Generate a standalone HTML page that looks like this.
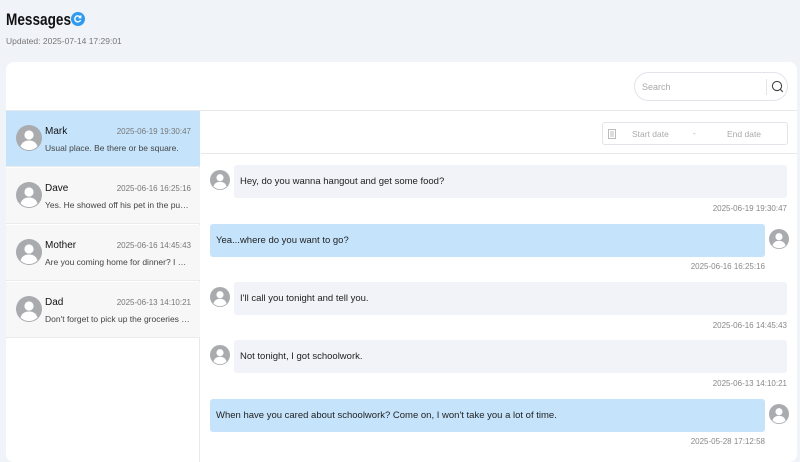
<!DOCTYPE html>
<html><head><meta charset="utf-8"><style>
*{box-sizing:border-box;margin:0;padding:0}
body{width:800px;height:450px;overflow:hidden;background:#f0f3f8;font-family:"Liberation Sans",sans-serif;position:relative;color:#222}
h1{position:absolute;left:6px;top:10px;font-size:17px;font-weight:bold;color:#111;transform:scaleX(0.8);transform-origin:left top}
.ref{position:absolute;left:71px;top:12px;width:14px;height:14px;border-radius:50%;background:#2f9bf0}
.upd{position:absolute;left:6px;top:36px;font-size:8.5px;color:#777}
.card{position:absolute;left:6px;top:62px;width:791px;height:400px;background:#fff;border-radius:8px;overflow:hidden}
.search{position:absolute;left:628px;top:10px;width:154px;height:29px;border:1px solid #e2e4ea;border-radius:15px;font-size:9px;color:#aaa;padding:9px 0 0 7px}
.hline{position:absolute;left:0;top:48px;width:791px;height:1px;background:#e6e8ec}
.list{position:absolute;left:0;top:49px;width:194px;height:360px;border-right:1px solid #e6e8ec}
.it{position:absolute;left:0;width:194px;height:56px;background:#f7f7f7;border-bottom:1px solid #ebebeb}
.it.sel{background:#c5e4fc}
.it svg{position:absolute;left:10px;top:14px}
.nm{position:absolute;left:39px;top:15px;font-size:10px;color:#111}
.tm{position:absolute;right:9px;top:16px;font-size:8px;color:#777}
.pv{position:absolute;left:39px;top:32px;width:148px;font-size:8.5px;color:#444;white-space:nowrap;overflow:hidden;text-overflow:ellipsis}
.date{position:absolute;left:596px;top:60px;width:186px;height:23px;border:1px solid #e2e4ea;border-radius:3px;font-size:8.5px;color:#aaa}
.hl2{position:absolute;left:195px;top:91px;width:596px;height:1px;background:#e6e8ec}
.b{position:absolute;height:33px;border-radius:3px;font-size:9.5px;color:#222;padding:11px 0 0 6px}
.b.l{background:#f1f3f8;left:228px;width:553px}
.b.r{background:#c5e4fc;left:204px;width:555px}
.ts{position:absolute;right:10px;font-size:8px;color:#888}
.av{position:absolute}
</style></head><body>
<h1>Messages</h1>
<div class="ref"><svg width="14" height="14" viewBox="0 0 14 14"><path d="M9.3 5.2A3 3 0 1 0 9.6 8" stroke="#fff" stroke-width="1.4" fill="none"/><path d="M9.8 3.4v2.4H7.4" stroke="#fff" stroke-width="1.2" fill="none"/></svg></div>
<div class="upd">Updated: 2025-07-14 17:29:01</div>
<svg width="0" height="0" style="position:absolute"><defs><symbol id="a" viewBox="0 0 26 26"><circle cx="13" cy="13" r="13" fill="#aaabaf"/><circle cx="13" cy="10" r="4.6" fill="#fff"/><path d="M4.5 21.5C6 17 9 15.5 13 15.5S20 17 21.5 21.5A12 12 0 0 1 4.5 21.5Z" fill="#fff"/></symbol></defs></svg>
<div class="card">
<div class="search">Search<span style="position:absolute;left:131px;top:6px;width:1px;height:16px;background:#e2e4ea"></span><svg style="position:absolute;left:136px;top:7px" width="13" height="13" viewBox="0 0 13 13"><circle cx="6" cy="6" r="4.6" stroke="#444" stroke-width="1.1" fill="none"/><path d="M9.3 9.3l2.5 2.5" stroke="#444" stroke-width="1.1"/></svg></div>
<div class="hline"></div>
<div class="list">
<div class="it sel" style="top:0"><svg width="26" height="26"><use href="#a"/></svg><div class="nm">Mark</div><div class="tm">2025-06-19 19:30:47</div><div class="pv">Usual place. Be there or be square.</div></div>
<div class="it" style="top:57px"><svg width="26" height="26"><use href="#a"/></svg><div class="nm">Dave</div><div class="tm">2025-06-16 16:25:16</div><div class="pv">Yes. He showed off his pet in the pub last night</div></div>
<div class="it" style="top:114px"><svg width="26" height="26"><use href="#a"/></svg><div class="nm">Mother</div><div class="tm">2025-06-16 14:45:43</div><div class="pv">Are you coming home for dinner? I made lasagna</div></div>
<div class="it" style="top:171px"><svg width="26" height="26"><use href="#a"/></svg><div class="nm">Dad</div><div class="tm">2025-06-13 14:10:21</div><div class="pv">Don't forget to pick up the groceries on your way</div></div>
</div>
<div class="date"><svg style="position:absolute;left:5px;top:6px" width="8" height="10" viewBox="0 0 8 10"><rect x="0.5" y="0.5" width="7" height="9" fill="none" stroke="#bbb"/><path d="M2 3h4M2 5h4M2 7h4" stroke="#bbb"/></svg><span style="position:absolute;left:29px;top:6px">Start date</span><span style="position:absolute;left:90px;top:5px">-</span><span style="position:absolute;left:124px;top:6px">End date</span></div>
<div class="hl2"></div>

<svg class="av" style="left:204px;top:108px" width="20" height="20"><use href="#a" width="20" height="20"/></svg>
<div class="b l" style="top:103px">Hey, do you wanna hangout and get some food?</div>
<div class="ts" style="top:142px">2025-06-19 19:30:47</div>

<div class="b r" style="top:162px">Yea...where do you want to go?</div>
<svg class="av" style="left:763px;top:167px" width="20" height="20"><use href="#a" width="20" height="20"/></svg>
<div class="ts" style="top:200px;right:32px">2025-06-16 16:25:16</div>

<svg class="av" style="left:204px;top:225px" width="20" height="20"><use href="#a" width="20" height="20"/></svg>
<div class="b l" style="top:220px">I'll call you tonight and tell you.</div>
<div class="ts" style="top:259px">2025-06-16 14:45:43</div>

<svg class="av" style="left:204px;top:283px" width="20" height="20"><use href="#a" width="20" height="20"/></svg>
<div class="b l" style="top:278px">Not tonight, I got schoolwork.</div>
<div class="ts" style="top:317px">2025-06-13 14:10:21</div>

<div class="b r" style="top:337px">When have you cared about schoolwork? Come on, I won't take you a lot of time.</div>
<svg class="av" style="left:763px;top:342px" width="20" height="20"><use href="#a" width="20" height="20"/></svg>
<div class="ts" style="top:375px;right:32px">2025-05-28 17:12:58</div>
</div>
</body></html>
